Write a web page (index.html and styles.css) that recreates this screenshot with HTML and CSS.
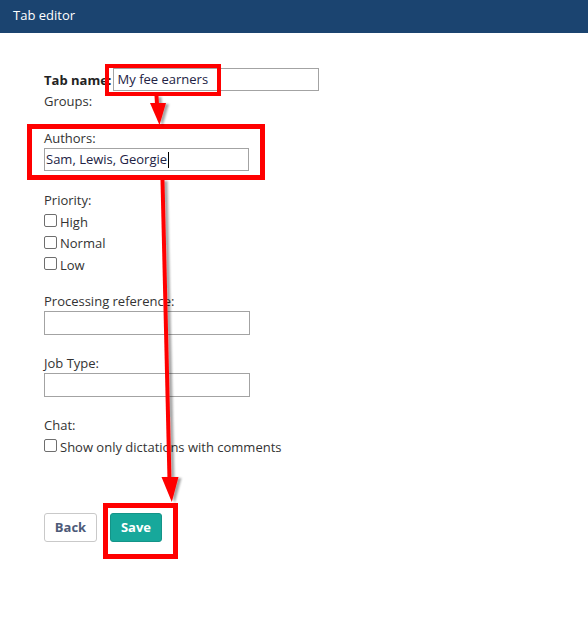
FILE: index.html
```html
<!DOCTYPE html>
<html>
<head>
<meta charset="utf-8">
<title>Tab editor</title>
<link rel="stylesheet" href="styles.css">
</head>
<body>
<div class="page">
  <header class="topbar">Tab editor</header>
  <form class="editor">
    <div class="row-name">
      <label class="strong">Tab name:</label>
      <div class="field name-field">My fee earners</div>
    </div>
    <div class="line">Groups:</div>

    <div class="label authors-label">Authors:</div>
    <div class="field tight">Sam, Lewis, Georgie<span class="caret"></span></div>

    <div class="label priority-label">Priority:</div>
    <div class="checks">
      <label class="check"><span class="box"></span>High</label>
      <label class="check"><span class="box"></span>Normal</label>
      <label class="check"><span class="box"></span>Low</label>
    </div>

    <div class="label gap-16">Processing reference:</div>
    <div class="field empty"></div>

    <div class="label gap-19">Job Type:</div>
    <div class="field empty"></div>

    <div class="label chat-label">Chat:</div>
    <label class="check single"><span class="box"></span>Show only dictations with comments</label>

    <div class="actions">
      <button type="button" class="btn btn-back">Back</button>
      <button type="button" class="btn btn-save">Save</button>
    </div>
  </form>

  <svg class="annotations" width="588" height="628" viewBox="0 0 588 628">
    <defs>
      <filter id="shadow" x="-50%" y="-10%" width="200%" height="120%">
        <feDropShadow dx="3" dy="1" stdDeviation="1.3" flood-color="#000" flood-opacity="0.35"/>
      </filter>
    </defs>
    <rect x="107" y="66" width="112" height="28" fill="none" stroke="#ff0000" stroke-width="4"/>
    <rect x="29.5" y="126.5" width="233" height="51" fill="none" stroke="#ff0000" stroke-width="5"/>
    <rect x="105.5" y="505.5" width="70" height="51" fill="none" stroke="#ff0000" stroke-width="5"/>
    <g filter="url(#shadow)" fill="#ff0000" stroke="none">
      <polygon points="154.5,96 158.5,96 159,104 155,104"/>
      <polygon points="150,103 166,103 159.5,125"/>
      <polygon points="160.5,180 164.5,180 171.5,480 167.5,480"/>
      <polygon points="161.5,477 178.5,477 171.8,502"/>
    </g>
  </svg>
</div>
</body>
</html>
```

FILE: styles.css
```css
* { box-sizing: border-box; }

html, body {
  margin: 0;
  padding: 0;
  background: #ffffff;
}

body {
  font-family: "Open Sans", "Noto Sans", sans-serif;
  font-size: 13px;
  color: #333333;
}

.page {
  position: relative;
  width: 588px;
  height: 628px;
  overflow: hidden;
}

.topbar {
  height: 33px;
  line-height: 31px;
  padding-left: 13px;
  background: #1b4470;
  color: #ffffff;
  font-size: 13px;
}

.editor {
  display: flex;
  flex-direction: column;
  align-items: flex-start;
  padding: 35px 0 0 44px;
}

.row-name {
  display: flex;
  align-items: center;
  gap: 1px;
  height: 23px;
}

.strong {
  font-weight: 700;
  color: #222222;
}

.line {
  line-height: 20px;
}

.label {
  line-height: 20px;
}

.authors-label { margin-top: 17px; }
.priority-label { margin-top: 19px; }
.gap-16 { margin-top: 16px; line-height: 19px; }
.gap-19 { margin-top: 19px; line-height: 19px; }
.chat-label { margin-top: 18px; }

.field {
  width: 206px;
  height: 23px;
  border: 1px solid #a3a3a3;
  background: #ffffff;
  color: #222244;
  line-height: 21px;
  padding: 0 4px;
  white-space: nowrap;
  display: flex;
  align-items: center;
}

.name-field {
  padding-left: 4px;
}

.tight {
  width: 205px;
  padding-left: 1px;
}

.empty {
  height: 24px;
}

.caret {
  display: inline-block;
  width: 1px;
  height: 16px;
  background: #000000;
  margin-left: 1px;
}

.checks {
  display: flex;
  flex-direction: column;
  margin-top: 1px;
}

.check {
  display: flex;
  align-items: center;
  height: 21.5px;
  color: #333333;
}

.check.single {
  height: 20px;
  margin-top: 2px;
}

.box {
  width: 13px;
  height: 13px;
  border: 1px solid #6e6e6e;
  border-radius: 2px;
  background: #ffffff;
  margin-right: 3px;
  margin-top: -2px;
}

.actions {
  display: flex;
  gap: 13px;
  margin-top: 56px;
}

.btn {
  font-family: "Open Sans", "Noto Sans", sans-serif;
  font-size: 13px;
  font-weight: 700;
  height: 29px;
  border-radius: 3px;
  padding: 0;
  cursor: pointer;
}

.btn-back {
  width: 53px;
  background: #ffffff;
  border: 1px solid #c9c9c9;
  color: #4d5a78;
}

.btn-save {
  width: 52px;
  background: #17a89b;
  border: 1px solid #149488;
  color: #ffffff;
}

.annotations {
  position: absolute;
  top: 0;
  left: 0;
  pointer-events: none;
}
```
